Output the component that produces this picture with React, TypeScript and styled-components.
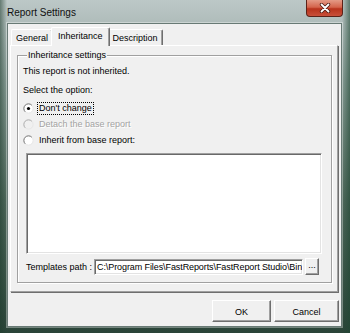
import React from 'react'
import styled, { createGlobalStyle } from 'styled-components'

const GlobalStyle = createGlobalStyle`
  html, body {
    margin: 0;
    padding: 0;
    background: #3f5a4c;
  }
  body {
    font-family: 'Liberation Sans', Arial, sans-serif;
    font-size: 9px;
    color: #000;
  }
`

const Window = styled.div`
  width: 350px;
  height: 333px;
  box-sizing: border-box;
  display: flex;
  flex-direction: column;
  padding: 0 8px 6px 7px;
  background:
    linear-gradient(to right, rgba(30, 60, 45, 0.55) 0, rgba(30, 60, 45, 0) 7px, rgba(30, 60, 45, 0) 342px, rgba(30, 70, 50, 0.6) 350px),
    linear-gradient(to bottom, #bcc8c7 0, #b0bdbb 22px, #8a9e98 80px, #50695c 200px, #2a4438 100%);
`

const TitleBar = styled.div`
  height: 23px;
  display: flex;
  align-items: flex-start;
  flex-shrink: 0;
`

const Title = styled.div`
  margin-top: 7px;
  font-size: 10px;
  line-height: 12px;
  color: #101010;
`

const CloseButton = styled.div`
  margin-left: auto;
  margin-right: -1px;
  width: 37px;
  height: 17px;
  box-sizing: border-box;
  border: 1px solid #5c2218;
  border-top: none;
  border-radius: 0 0 4px 4px;
  background: linear-gradient(to bottom, #e49a86 0, #d4644c 45%, #b8331c 55%, #c8503a 100%);
  display: flex;
  align-items: center;
  justify-content: center;
`

const Client = styled.div`
  flex: 1;
  display: flex;
  flex-direction: column;
  box-sizing: border-box;
  background: #f0f0f0;
  border: 1px solid #687a75;
  box-shadow: 0 0 0 1px rgba(255, 255, 255, 0.35);
  padding: 3px 3px 0 2px;
`

const TabStrip = styled.div`
  height: 18px;
  display: flex;
  align-items: flex-end;
  padding-left: 1px;
`

const Tab = styled.div<{ $active?: boolean }>`
  position: relative;
  box-sizing: border-box;
  height: ${({ $active }) => ($active ? '19px' : '16px')};
  margin: ${({ $active }) => ($active ? '0 -2px -1px -2px' : '0')};
  padding: ${({ $active }) => ($active ? '2px 6px 0 6px' : '2px 4px 0 4px')};
  z-index: ${({ $active }) => ($active ? 1 : 0)};
  background: #f0f0f0;
  border-top: 1px solid #fff;
  border-left: 1px solid #fff;
  border-right: 1px solid #6e6e6e;
  box-shadow: inset -1px 0 0 #a0a0a0;
  border-radius: 2px 2px 0 0;
  line-height: 12px;
  white-space: nowrap;
`

const Panel = styled.div`
  height: 247px;
  box-sizing: border-box;
  display: flex;
  flex-direction: column;
  border-top: 1px solid #fff;
  border-left: 1px solid #fff;
  border-right: 1px solid #a0a0a0;
  border-bottom: 1px solid #a0a0a0;
  box-shadow: 1px 1px 0 #6e6e6e;
  padding: 4px 5px 8px 6px;
`

const GroupBox = styled.fieldset`
  flex: 1;
  margin: 0;
  padding: 0 9px 0 5px;
  min-width: 0;
  border: 1px solid #a0a0a0;
  box-shadow: inset 1px 1px 0 #fff, 1px 1px 0 #fff;
`

const Legend = styled.legend`
  margin-left: 4px;
  padding: 0 1px;
  line-height: 11px;
  background: #f0f0f0;
`

const GroupBody = styled.div`
  display: flex;
  flex-direction: column;
`

const Label = styled.div<{ $top: number }>`
  margin-top: ${({ $top }) => $top}px;
  line-height: 11px;
  white-space: nowrap;
`

const RadioList = styled.div`
  margin-top: 4px;
  display: flex;
  flex-direction: column;
`

const RadioRow = styled.div<{ $disabled?: boolean }>`
  height: 16px;
  display: flex;
  align-items: center;
  gap: 4px;
  color: ${({ $disabled }) => ($disabled ? '#a3a3a3' : '#000')};
  text-shadow: ${({ $disabled }) => ($disabled ? '1px 1px 0 #fff' : 'none')};
`

const RadioText = styled.span<{ $focused?: boolean }>`
  line-height: 11px;
  padding: 0 1px;
  outline: ${({ $focused }) => ($focused ? '1px dotted #000' : 'none')};
`

const ListBox = styled.div`
  margin: 5px 0 0 3px;
  height: 101px;
  box-sizing: border-box;
  background: #fff;
  border-top: 1px solid #a0a0a0;
  border-left: 1px solid #a0a0a0;
  border-right: 1px solid #fff;
  border-bottom: 1px solid #fff;
  box-shadow: inset 1px 1px 0 #696969, inset -1px -1px 0 #e3e3e3;
`

const PathRow = styled.div`
  margin: 4px 0 0 3px;
  display: flex;
  align-items: center;
  height: 17px;
`

const PathLabel = styled.span`
  width: 68px;
  flex-shrink: 0;
  white-space: nowrap;
`

const PathInput = styled.div`
  width: 209px;
  height: 16px;
  box-sizing: border-box;
  background: #fff;
  border-top: 1px solid #a0a0a0;
  border-left: 1px solid #a0a0a0;
  border-right: 1px solid #fff;
  border-bottom: 1px solid #fff;
  box-shadow: inset 1px 1px 0 #696969, inset -1px -1px 0 #e3e3e3;
  padding: 1px 0 0 2px;
  line-height: 12px;
  letter-spacing: -0.09px;
  white-space: nowrap;
  overflow: hidden;
`

const SmallButton = styled.div`
  margin-left: 2px;
  width: 14px;
  height: 17px;
  box-sizing: border-box;
  border-top: 1px solid #fff;
  border-left: 1px solid #fff;
  border-right: 1px solid #6e6e6e;
  border-bottom: 1px solid #6e6e6e;
  box-shadow: inset -1px -1px 0 #a0a0a0;
  background: #f0f0f0;
  text-align: center;
  line-height: 12px;
`

const ButtonRow = styled.div`
  margin-top: 8px;
  display: flex;
  justify-content: flex-end;
  gap: 3px;
  margin-right: -1px;
`

const DialogButton = styled.div<{ $width: number }>`
  width: ${({ $width }) => $width}px;
  height: 22px;
  box-sizing: border-box;
  padding-top: 1px;
  border-top: 1px solid #fff;
  border-left: 1px solid #fff;
  border-right: 1px solid #6e6e6e;
  border-bottom: 1px solid #6e6e6e;
  box-shadow: inset -1px -1px 0 #a0a0a0;
  background: #f0f0f0;
  display: flex;
  align-items: center;
  justify-content: center;
`

const CloseIcon = () => (
  <svg width="12" height="10" viewBox="0 0 12 10">
    <path d="M2.5 1.5 L9.5 8.5 M9.5 1.5 L2.5 8.5" stroke="#4a1a12" strokeWidth="3.4" strokeLinecap="round" />
    <path d="M2.5 1.5 L9.5 8.5 M9.5 1.5 L2.5 8.5" stroke="#fff" strokeWidth="1.8" strokeLinecap="round" />
  </svg>
)

const Radio = ({ checked, disabled }: { checked?: boolean; disabled?: boolean }) => (
  <svg width="11" height="11" viewBox="0 0 11 11">
    <circle cx="5.5" cy="5.5" r="4.6" fill={disabled ? '#f0f0f0' : '#fff'} stroke="#e6e6e6" />
    <path d="M2.2 8.8 A4.6 4.6 0 0 1 8.8 2.2" fill="none" stroke={disabled ? '#b0b0b0' : '#7a7a7a'} />
    {checked && <circle cx="5.5" cy="5.5" r="1.6" fill="#000" />}
  </svg>
)

const App = () => {
  return (
    <>
      <GlobalStyle />
      <Window>
        <TitleBar>
          <Title>Report Settings</Title>
          <CloseButton>
            <CloseIcon />
          </CloseButton>
        </TitleBar>
        <Client>
          <TabStrip>
            <Tab>General</Tab>
            <Tab $active>Inheritance</Tab>
            <Tab>Description</Tab>
          </TabStrip>
          <Panel>
            <GroupBox>
              <Legend>Inheritance settings</Legend>
              <GroupBody>
                <Label $top={5}>This report is not inherited.</Label>
                <Label $top={8}>Select the option:</Label>
                <RadioList>
                  <RadioRow>
                    <Radio checked />
                    <RadioText $focused>Don't change</RadioText>
                  </RadioRow>
                  <RadioRow $disabled>
                    <Radio disabled />
                    <RadioText>Detach the base report</RadioText>
                  </RadioRow>
                  <RadioRow>
                    <Radio />
                    <RadioText>Inherit from base report:</RadioText>
                  </RadioRow>
                </RadioList>
                <ListBox />
                <PathRow>
                  <PathLabel>Templates path :</PathLabel>
                  <PathInput>C:\Program Files\FastReports\FastReport Studio\Bin</PathInput>
                  <SmallButton>...</SmallButton>
                </PathRow>
              </GroupBody>
            </GroupBox>
          </Panel>
          <ButtonRow>
            <DialogButton $width={59}>OK</DialogButton>
            <DialogButton $width={65}>Cancel</DialogButton>
          </ButtonRow>
        </Client>
      </Window>
    </>
  )
}

export default App
